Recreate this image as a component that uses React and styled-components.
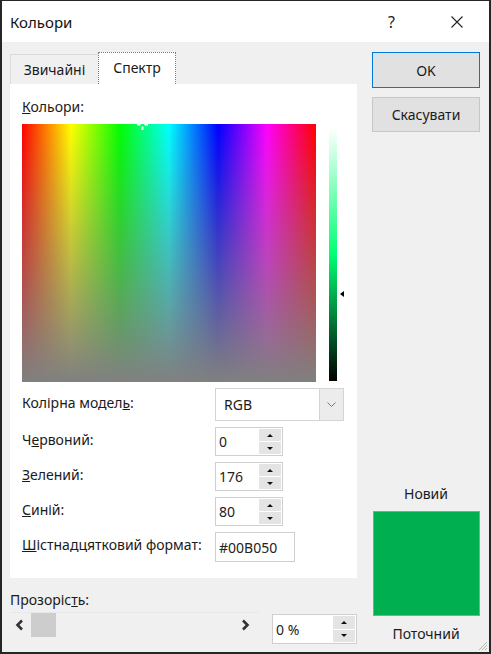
import React from "react";
import styled, { createGlobalStyle } from "styled-components";

const GlobalStyle = createGlobalStyle`
  html, body {
    margin: 0;
    padding: 0;
    background: #ffffff;
  }
  * {
    box-sizing: border-box;
  }
`;

const Frame = styled.div`
  position: relative;
  width: 491px;
  height: 654px;
  border: 2px solid #262626;
  border-top-width: 1px;
  display: flex;
  flex-direction: column;
  font-family: "Noto Sans", "Open Sans", sans-serif;
  font-size: 14px;
  color: #1b1b1b;
  background: #f0f0f0;
  overflow: hidden;
`;

const TitleBar = styled.div`
  height: 41px;
  flex-shrink: 0;
  background: #ffffff;
  display: flex;
  align-items: center;
  padding-left: 8px;
`;

const Title = styled.div`
  font-size: 15px;
  color: #111;
  flex: 1;
`;

const TitleButton = styled.div`
  width: 65px;
  height: 41px;
  display: flex;
  align-items: center;
  justify-content: center;
  font-size: 16px;
  color: #222;
`;

const Body = styled.div`
  flex: 1;
  display: grid;
  grid-template-columns: 347px 108px;
  column-gap: 15px;
  padding: 10px 0 0 8px;
`;

const LeftColumn = styled.div`
  display: flex;
  flex-direction: column;
`;

const TabStrip = styled.div`
  height: 32px;
  display: flex;
  align-items: flex-end;
`;

const Tab = styled.div`
  height: ${(p) => (p.$active ? "32px" : "30px")};
  width: ${(p) => p.$width}px;
  display: flex;
  align-items: center;
  justify-content: center;
  padding-bottom: ${(p) => (p.$active ? "2px" : "0")};
  background: ${(p) => (p.$active ? "#ffffff" : "#f0f0f0")};
  border: 1px ${(p) => (p.$active ? "dotted #7a7a7a" : "solid #dadada")};
  border-bottom: none;
  border-right: ${(p) => (p.$active ? "1px dotted #7a7a7a" : "none")};
  color: #1b1b1b;
`;

const TabPanel = styled.div`
  height: 494px;
  background: #ffffff;
  padding: 14px 12px 16px 12px;
  display: flex;
  flex-direction: column;
`;

const Label = styled.div`
  line-height: 18px;
  height: 18px;
  white-space: nowrap;
`;

const SpectrumRow = styled.div`
  margin-top: 8px;
  display: flex;
  align-items: flex-start;
`;

const Spectrum = styled.div`
  position: relative;
  width: 294px;
  height: 258px;
  background: linear-gradient(to bottom, rgba(128, 128, 128, 0), #808080),
    linear-gradient(
      to right,
      #ff0000 0%,
      #ffff00 16.67%,
      #00ff00 33.33%,
      #00ffff 50%,
      #0000ff 66.67%,
      #ff00ff 83.33%,
      #ff0000 100%
    );
`;

const Crosshair = styled.svg`
  position: absolute;
  top: -5px;
  width: 11px;
  height: 11px;
  margin-left: -5px;
`;

const LumWrap = styled.div`
  position: relative;
  margin-left: 13px;
  margin-top: 4px;
  width: 16px;
  height: 253px;
`;

const LumBar = styled.div`
  width: 8px;
  height: 253px;
  background: linear-gradient(
    to bottom,
    #ffffff 0%,
    hsl(147, 100%, 50%) 50%,
    #000000 100%
  );
`;

const LumArrow = styled.div`
  position: absolute;
  left: 11px;
  width: 0;
  height: 0;
  margin-top: -3px;
  border-top: 3px solid transparent;
  border-bottom: 3px solid transparent;
  border-right: 4px solid #000;
`;

const Controls = styled.div`
  margin-top: 6px;
  display: grid;
  grid-template-columns: 193px auto;
  row-gap: 6px;
  align-items: center;
`;

const FieldLabel = styled(Label)`
  margin-top: -4px;
`;

const Select = styled.div`
  width: 129px;
  height: 33px;
  border: 1px solid #d4d4d4;
  display: flex;
  background: #fff;
`;

const SelectValue = styled.div`
  flex: 1;
  display: flex;
  align-items: center;
  padding-left: 8px;
`;

const SelectArrow = styled.div`
  width: 24px;
  border-left: 1px solid #d4d4d4;
  background: #ececec;
  display: flex;
  align-items: center;
  justify-content: center;
`;

const Spin = styled.div`
  width: ${(p) => p.$width}px;
  height: ${(p) => p.$height}px;
  border: 1px solid #cfcfcf;
  display: flex;
  background: #fff;
`;

const SpinValue = styled.div`
  flex: 1;
  display: flex;
  align-items: center;
  padding-left: 3px;
  color: #222;
`;

const SpinButtons = styled.div`
  width: 23px;
  display: flex;
  flex-direction: column;
  gap: 1px;
  padding: 1px 1px 1px 0;
  background: #ffffff;
`;

const SpinButton = styled.div`
  flex: 1;
  background: #e4e4e4;
  display: flex;
  align-items: center;
  justify-content: center;
`;

const Tri = styled.div`
  width: 0;
  height: 0;
  border-left: 3px solid transparent;
  border-right: 3px solid transparent;
  ${(p) =>
    p.$up ? "border-bottom: 3px solid #111;" : "border-top: 3px solid #111;"}
`;

const TextBox = styled.div`
  width: 80px;
  height: 30px;
  border: 1px solid #cfcfcf;
  background: #fff;
  display: flex;
  align-items: center;
  padding-left: 3px;
  color: #222;
`;

const TransparencyLabel = styled(Label)`
  margin-top: 13px;
`;

const SliderRow = styled.div`
  margin-top: 3px;
  display: flex;
  align-items: flex-start;
  gap: 13px;
`;

const Track = styled.div`
  width: 250px;
  height: 25px;
  border-top: 1px solid #e8e8e8;
  display: flex;
  align-items: center;
  padding: 0 9px 0 5px;
`;

const Thumb = styled.div`
  width: 25px;
  height: 24px;
  margin-left: 7px;
  background: #cdcdcd;
`;

const Spacer = styled.div`
  flex: 1;
`;

const SpinHolder = styled.div`
  margin-top: 2px;
`;

const Chevron = styled.svg`
  width: 9px;
  height: 12px;
  flex-shrink: 0;
`;

const RightColumn = styled.div`
  display: flex;
  flex-direction: column;
  align-items: stretch;
`;

const Button = styled.div`
  height: ${(p) => p.$height}px;
  margin-top: ${(p) => p.$top || 0}px;
  background: #e1e1e1;
  border: 1px solid ${(p) => (p.$default ? "#0078d7" : "#c6c6c6")};
  display: flex;
  align-items: center;
  justify-content: center;
  color: #1b1b1b;
`;

const Preview = styled.div`
  margin-top: auto;
  padding-bottom: 9px;
  display: flex;
  flex-direction: column;
  align-items: center;
`;

const Swatch = styled.div`
  width: 107px;
  height: 105px;
  margin: 8px 0 9px 1px;
  background: #00b050;
  border: 1px solid #9a9a9a;
`;

const Grip = styled.svg`
  position: absolute;
  right: 1px;
  bottom: 1px;
  width: 12px;
  height: 12px;
`;

const SpinBox = ({ value, width = 68, height = 29 }) => (
  <Spin $width={width} $height={height}>
    <SpinValue>{value}</SpinValue>
    <SpinButtons>
      <SpinButton>
        <Tri $up />
      </SpinButton>
      <SpinButton>
        <Tri />
      </SpinButton>
    </SpinButtons>
  </Spin>
);

const HUE = 147.3;
const LIGHTNESS = 0.345;

export default function App() {
  return (
    <>
      <GlobalStyle />
      <Frame>
        <TitleBar>
          <Title>Кольори</Title>
          <TitleButton>?</TitleButton>
          <TitleButton>
            <svg width="12" height="12" viewBox="0 0 12 12">
              <path d="M0.5 0.5 L11.5 11.5 M11.5 0.5 L0.5 11.5" stroke="#222" strokeWidth="1.1" />
            </svg>
          </TitleButton>
        </TitleBar>
        <Body>
          <LeftColumn>
            <TabStrip>
              <Tab $width={88}>Звичайні</Tab>
              <Tab $width={78} $active>
                Спектр
              </Tab>
            </TabStrip>
            <TabPanel>
              <Label>
                <u>К</u>ольори:
              </Label>
              <SpectrumRow>
                <Spectrum>
                  <Crosshair style={{ left: `${(HUE / 360) * 100}%` }} viewBox="0 0 11 11">
                    <path d="M5.5 0 V3.5 M5.5 7.5 V11 M0 5.5 H3.5 M7.5 5.5 H11" stroke="#fff" strokeWidth="2" />
                  </Crosshair>
                </Spectrum>
                <LumWrap>
                  <LumBar />
                  <LumArrow style={{ top: `${(1 - LIGHTNESS) * 100}%` }} />
                </LumWrap>
              </SpectrumRow>
              <Controls>
                <FieldLabel>
                  Колірна модел<u>ь</u>:
                </FieldLabel>
                <Select>
                  <SelectValue>RGB</SelectValue>
                  <SelectArrow>
                    <svg width="9" height="5" viewBox="0 0 9 5">
                      <path d="M0.5 0.5 L4.5 4.5 L8.5 0.5" fill="none" stroke="#777" strokeWidth="1" />
                    </svg>
                  </SelectArrow>
                </Select>
                <FieldLabel>
                  Ч<u>е</u>рвоний:
                </FieldLabel>
                <SpinBox value="0" />
                <FieldLabel>
                  <u>З</u>елений:
                </FieldLabel>
                <SpinBox value="176" />
                <FieldLabel>
                  <u>С</u>иній:
                </FieldLabel>
                <SpinBox value="80" />
                <FieldLabel>
                  <u>Ш</u>істнадцятковий формат:
                </FieldLabel>
                <TextBox>#00B050</TextBox>
              </Controls>
            </TabPanel>
            <TransparencyLabel>
              Прозоріс<u>т</u>ь:
            </TransparencyLabel>
            <SliderRow>
              <Track>
                <Chevron viewBox="0 0 9 12">
                  <path d="M7 1.5 L2.5 6 L7 10.5" fill="none" stroke="#333" strokeWidth="2.6" />
                </Chevron>
                <Thumb />
                <Spacer />
                <Chevron viewBox="0 0 9 12">
                  <path d="M2 1.5 L6.5 6 L2 10.5" fill="none" stroke="#333" strokeWidth="2.6" />
                </Chevron>
              </Track>
              <SpinHolder>
                <SpinBox value="0 %" width={85} height={30} />
              </SpinHolder>
            </SliderRow>
          </LeftColumn>
          <RightColumn>
            <Button $height={36} $default>
              OK
            </Button>
            <Button $height={35} $top={9}>
              Скасувати
            </Button>
            <Preview>
              <Label>Новий</Label>
              <Swatch />
              <Label>Поточний</Label>
            </Preview>
          </RightColumn>
        </Body>
        <Grip viewBox="0 0 12 12">
          <path d="M11 3 L3 11 M11 6 L6 11 M11 9 L9 11" stroke="#b5b5b5" strokeWidth="1" />
        </Grip>
      </Frame>
    </>
  );
}
